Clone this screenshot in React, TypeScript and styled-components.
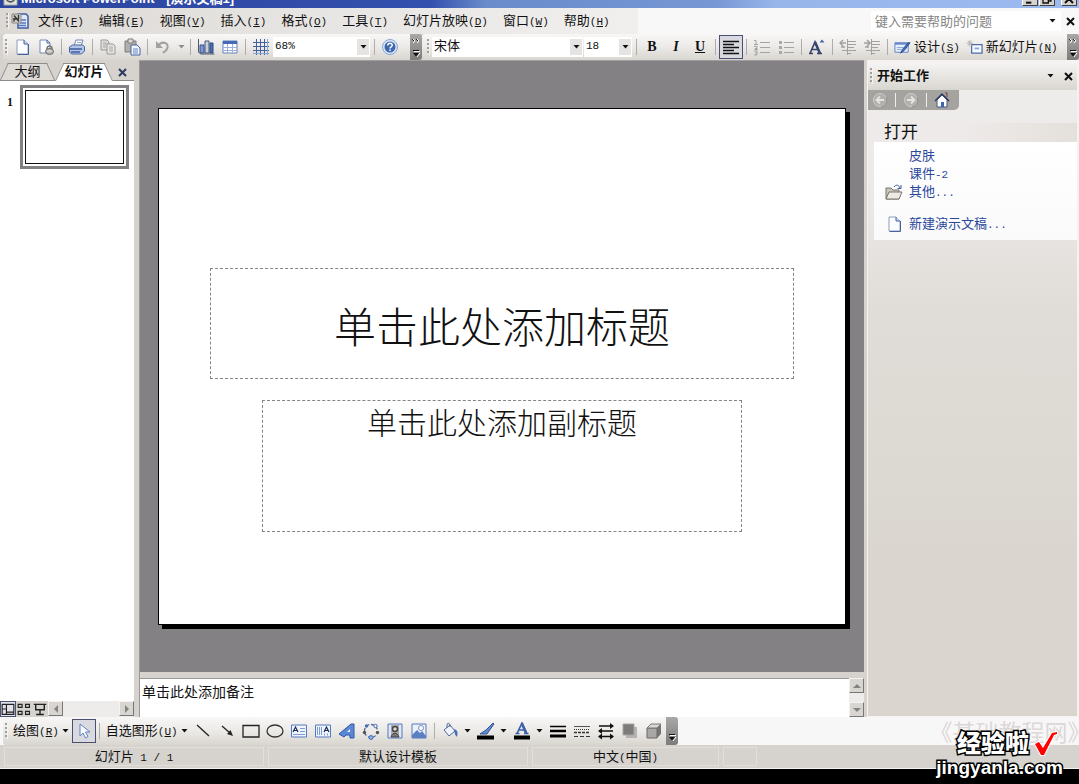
import React from 'react';
import styled, { createGlobalStyle, css } from 'styled-components';

const UI = `"Liberation Sans", "Noto Sans CJK SC", sans-serif`;
const MONO = `"Liberation Mono", "Noto Sans CJK SC", monospace`;
const SERIF = `"Liberation Serif", "Noto Sans CJK SC", serif`;

const GlobalStyle = createGlobalStyle`
  *, *::before, *::after { box-sizing: border-box; }
  body { margin: 0; background: #000; font: 13px/16px ${UI}; color: #111; }
  button, select, input, textarea { font: inherit; color: inherit; margin: 0; padding: 0; border: 0; border-radius: 0; background: none; outline: 0; }
  h1, h2, p, ul { margin: 0; padding: 0; font: inherit; list-style: none; }
  svg { display: block; flex: none; }
`;

const Window = styled.div`
  display: flex;
  flex-direction: column;
  min-height: 100vh;
  padding-bottom: 15px;
  position: relative;
  overflow: hidden;
`;

/* Title bar */
const TitleBar = styled.header`
  display: flex;
  align-items: flex-end;
  height: 8px;
  padding: 0 2px 2px 3px;
  overflow: hidden;
  color: #fff;
  background: linear-gradient(90deg, #2c46a0 0%, #3450ae 40%, #6a8cca 45%, #7696d4 66%, #98b6ea 72%, #9cbaf0 100%);
`;
const WindowTitle = styled.h1`
  flex: 1;
  margin-left: 3px;
  font-weight: 700;
  font-size: 13px;
  line-height: 14px;
  white-space: pre;
`;
const WindowButtons = styled.div`
  display: flex;
  gap: 1px;
  & > :last-child { margin-left: 5px; }
`;
const WindowButton = styled.button`
  display: flex;
  align-items: flex-end;
  justify-content: center;
  width: 16px;
  height: 14px;
  background: #d6d3ce;
  border: 1px solid;
  border-color: #fff #404040 #404040 #fff;
`;

/* Bars */
const MenuBar = styled.nav`
  display: flex;
  align-items: center;
  height: 26px;
  padding-left: 4px;
  background: linear-gradient(90deg, #dcd9d5 0, #e8e6e4 340px, #f1efee 637px, #f9f8f8 639px);
`;
const Mnemonic = styled.span`
  font: 11px/16px ${MONO};
  u { text-underline-offset: 1px; }
`;
const MenuButton = styled.button`
  padding: 0 8px 0 7px;
  height: 20px;
  white-space: nowrap;
`;
const AppIconBox = styled.span`
  width: 20px;
  display: flex;
`;
const HelpBox = styled.label`
  display: flex;
  align-items: center;
  width: 190px;
  height: 20px;
  margin-left: auto;
  padding-left: 4px;
  background: #fff;
  input { flex: 1; min-width: 0; height: 18px; }
  input::placeholder { color: #858585; opacity: 1; }
`;
const SmallButton = styled.button`
  display: flex;
  align-items: center;
  justify-content: center;
  width: 18px;
  height: 18px;
`;
const Bar = styled.div`
  display: flex;
  align-items: center;
  padding-left: 3px;
  background: #d6d3ce;
`;
const TopBar = styled(Bar)`height: 26px;`;
const BottomBar = styled(Bar)`height: 28px; background: #f8f7f7;`;
const Strip = styled.div<{ $grow?: boolean }>`
  display: flex;
  align-items: center;
  align-self: stretch;
  flex: ${p => (p.$grow ? '1 0 auto' : 'none')};
  padding-left: ${p => (p.$grow ? 3 : 0)}px;
  background: linear-gradient(#f8f7f6, #eceae7 50%, #d9d6d0);
  border-radius: 3px 0 0 3px;
`;
const Grip = styled.span`
  flex: none;
  width: 3px;
  height: 16px;
  margin: 0 2px;
  background: repeating-linear-gradient(#a09e9b 0 2px, transparent 2px 4px);
  border-right: 1px solid #f4f3f2;
`;
const ToolButton = styled.button<{ $active?: boolean; $tight?: boolean }>`
  display: flex;
  align-items: center;
  justify-content: center;
  flex: none;
  width: 24px;
  height: 24px;
  ${p => p.$tight && css`width: 12px;`}
  ${p => p.$active && css`border: 1px solid #4b5070; background: #d9dae0;`}
`;
const LabelButton = styled.button`
  display: flex;
  align-items: center;
  height: 24px;
  padding: 0 3px;
  white-space: nowrap;
  svg { margin-right: 3px; }
  svg:last-child { margin: 0 0 0 3px; }
`;
const Sep = styled.span`
  flex: none;
  width: 1px;
  height: 16px;
  margin: 0 3px;
  background: #aeacaa;
`;
const Combo = styled.span<{ $w: number; $latin?: boolean }>`
  display: flex;
  align-items: center;
  flex: none;
  width: ${p => p.$w}px;
  height: 20px;
  margin-right: 1px;
  background: #fff;
  select {
    appearance: none;
    flex: 1;
    min-width: 0;
    height: 18px;
    padding: 0 2px 2px;
    ${p => p.$latin && css`font: 11px/16px ${MONO};`}
  }
  span {
    display: flex;
    align-items: center;
    justify-content: center;
    width: 12px;
    height: 16px;
    margin-right: 1px;
    background: #e6e4e2;
  }
`;
const EndCap = styled.button`
  align-self: stretch;
  flex: none;
  width: 12px;
  border-radius: 0 3px 3px 0;
  background: linear-gradient(#aaa8a6, #7e7c7a);
`;
const CapGap = styled.span<{ $w: number }>`flex: none; width: ${p => p.$w}px;`;
const Letter = styled.span<{ $kind: 'b' | 'i' | 'u' }>`
  font: 700 14px/16px ${SERIF};
  font-style: ${p => (p.$kind === 'i' ? 'italic' : 'normal')};
  text-decoration: ${p => (p.$kind === 'u' ? 'underline' : 'none')};
`;

/* Work area */
const Workspace = styled.div`
  display: grid;
  grid-template-columns: 134px minmax(0, 1fr) 212px;
  flex: 1;
  background: #d6d3ce;
`;
const Outline = styled.aside`
  display: flex;
  flex-direction: column;
  background: #fff;
`;
const Tabs = styled.div`
  display: flex;
  align-items: stretch;
  height: 21px;
  padding: 3px 3px 0 0;
  background: #d6d3ce;
  border-bottom: 1px solid #8e8c8a;
  & > :last-child { margin-left: auto; }
`;
const Tab = styled.button<{ $active?: boolean }>`
  position: relative;
  isolation: isolate;
  width: ${p => (p.$active ? 58 : 55)}px;
  height: ${p => (p.$active ? 18 : 17)}px;
  z-index: ${p => (p.$active ? 1 : 0)};
  font-weight: ${p => (p.$active ? 700 : 400)};
  white-space: nowrap;
  &::before, &::after {
    content: '';
    position: absolute;
    z-index: -1;
    top: 0;
    bottom: 0;
    transform-origin: bottom;
    background: ${p => (p.$active ? '#fff' : '#dedbd7')};
    border-top: 1px solid #8e8c8a;
  }
  &::before { left: 0; right: 40%; transform: skewX(-25deg); border-left: 1px solid #8e8c8a; }
  &::after { right: 0; left: 40%; transform: skewX(25deg); border-right: 1px solid #8e8c8a; }
`;
const SlideList = styled.ol`
  flex: 1;
  margin: 0;
  padding: 4px 5px 0 7px;
  list-style: none;
  li { display: flex; gap: 7px; }
  b { width: 6px; padding-top: 9px; font: 700 12px/16px ${SERIF}; }
`;
const Thumb = styled.button`
  flex: 1;
  height: 84px;
  padding: 2px;
  border: 3px solid #838183;
  background: #fff;
  span { display: block; height: 100%; border: 1px solid #111; }
`;
const ViewRow = styled.div`
  display: flex;
  height: 16px;
  background: #d6d3ce;
`;
const ViewButton = styled.button<{ $active?: boolean }>`
  display: flex;
  align-items: center;
  justify-content: center;
  width: 16px;
  ${p => p.$active && css`border: 1px solid #4b5070; background: #e2e2e8;`}
`;
const ScrollTrack = styled.div<{ $vertical?: boolean }>`
  display: flex;
  flex-direction: ${p => (p.$vertical ? 'column' : 'row')};
  justify-content: space-between;
  flex: ${p => (p.$vertical ? '0 0 15px' : '1')};
  background: #eeecea;
`;
const ScrollButton = styled.button`
  display: flex;
  align-items: center;
  justify-content: center;
  width: 15px;
  height: 15px;
  background: #d9d6d2;
  border: 1px solid;
  border-color: #f4f3f2 #777 #777 #f4f3f2;
`;
const Editor = styled.main`
  display: flex;
  flex-direction: column;
  margin: 0 3px 0 5px;
  border-left: 1px solid #9a9896;
`;
const Canvas = styled.div`
  display: flex;
  align-items: center;
  flex: 1;
  padding: 0 18px;
  background: #838183;
  border-top: 1px solid #a09ea0;
`;
const Slide = styled.section`
  display: flex;
  flex-direction: column;
  align-items: center;
  gap: 21px;
  flex: 1;
  aspect-ratio: 688 / 517;
  padding-top: 159px;
  background: #fff;
  border: 1px solid #000;
  box-shadow: 4px 4px 0 #000;
`;
const Placeholder = styled.div<{ $sub?: boolean }>`
  display: flex;
  justify-content: center;
  align-items: ${p => (p.$sub ? 'flex-start' : 'center')};
  width: ${p => (p.$sub ? '70%' : '85%')};
  height: ${p => (p.$sub ? 132 : 111)}px;
  padding-top: ${p => (p.$sub ? 4 : 10)}px;
  border: 1px dashed #858585;
  font: 300 ${p => (p.$sub ? '30px/38px' : '42px/52px')} ${SERIF};
  text-align: center;
`;
const Notes = styled.div`
  display: flex;
  height: 45px;
  padding-top: 6px;
  background: #d6d3ce;
  textarea {
    flex: 1;
    min-width: 0;
    padding: 4px 2px;
    resize: none;
    background: #fff;
    border-top: 1px solid #999;
    font-size: 14px;
    line-height: 18px;
    overflow: hidden;
  }
  textarea::placeholder { color: #111; opacity: 1; }
`;

/* Task pane */
const TaskPane = styled.aside`
  display: flex;
  flex-direction: column;
  border: solid #f4f3f2;
  border-width: 2px 2px 1px 1px;
  background: linear-gradient(#efecec 0, #ece9e8 120px, #e0ddd8 250px, #dad6cf 500px);
`;
const PaneHeader = styled.div`
  display: flex;
  align-items: center;
  height: 28px;
  background: linear-gradient(#f6f5f4, #d9d6d0);
  h2 { flex: 1; font-weight: 700; margin-left: 2px; }
`;
const PaneNav = styled.div`
  display: flex;
  align-items: center;
  align-self: flex-start;
  width: 91px;
  height: 20px;
  background: #a5a39f;
  border-radius: 0 0 5px 0;
  & > span { background: #eee; height: 14px; }
`;
const PaneTitle = styled.h2`
  margin: 13px 0 0 7px;
  padding: 0 9px;
  height: 19px;
  font-size: 17px;
  line-height: 20px;
  background: linear-gradient(90deg, transparent 40%, #e4e1dc);
`;
const PaneCard = styled.ul`
  margin-left: 6px;
  padding: 5px 0 7px 11px;
  background: linear-gradient(#fff, #fafafa);
`;
const PaneItem = styled.li<{ $gap?: boolean }>`
  display: grid;
  grid-template-columns: 16px 1fr;
  column-gap: 8px;
  align-items: center;
  height: 18px;
  margin-top: ${p => (p.$gap ? 14 : 0)}px;
  a { grid-column: 2; color: #2a479c; text-decoration: none; }
`;

/* Status bar */
const StatusBar = styled.footer`
  display: flex;
  gap: 4px;
  height: 24px;
  padding: 2px 4px;
  background: #d6d3ce;
  border-bottom: 1px solid #f4f3f2;
`;
const StatusCell = styled.div<{ $w: number }>`
  width: ${p => p.$w}px;
  border: 1px solid #e2dfdb;
  text-align: center;
  line-height: 18px;
  white-space: pre;
`;
const SiteName = styled.span`
  margin-left: auto;
  color: #dcd8d8;
  font: 23px/26px "Noto Sans CJK SC", sans-serif;
  font-feature-settings: "halt";
  white-space: nowrap;
`;
const Stamp = styled.div`
  position: absolute;
  right: 16px;
  bottom: 6px;
  color: #fff;
  font-weight: 900;
  -webkit-text-stroke: 3px #000;
  paint-order: stroke fill;
`;
const StampTop = styled.p`
  display: flex;
  align-items: center;
  justify-content: flex-end;
  gap: 4px;
  padding-right: 5px;
  font-size: 24px;
  line-height: 26px;
`;
const StampUrl = styled.p`
  font-size: 19px;
  line-height: 20px;
`;

/* Icons */
const Svg = ({ s = 18, children }: { s?: number; children: React.ReactNode }) => (
  <svg width={s} height={s} viewBox="0 0 18 18" fill="none" aria-hidden="true">{children}</svg>
);
const Down = ({ c = '#111' }: { c?: string }) => (
  <svg width="7" height="4" viewBox="0 0 7 4" aria-hidden="true"><path d="M0.5 0h6L3.5 3.5z" fill={c} /></svg>
);
const Cross = ({ c = '#111' }: { c?: string }) => (
  <svg width="9" height="9" viewBox="0 0 9 9" aria-hidden="true"><path d="M1 1l7 7M8 1L1 8" stroke={c} strokeWidth="2" /></svg>
);
const Triangle = ({ d }: { d: string }) => (
  <svg width="8" height="8" viewBox="0 0 8 8" aria-hidden="true"><path d={d} fill="#858381" /></svg>
);
const CapArt = ({ more = true }: { more?: boolean }) => (
  <svg width="12" height="26" viewBox="0 0 12 26" aria-hidden="true">
    {more && <path d="M3 5l2 2-2 2M7 5l2 2-2 2" stroke="#fff" fill="none" />}
    {more && <path d="M2 5l2 2M6 5l2 2" stroke="#222" fill="none" />}
    <path d="M4 17.500h6M10 19l-3 4" stroke="#fff" fill="none" />
    <path d="M3 16.500h6" stroke="#111" />
    <path d="M3 19h6l-3 3.500z" fill="#111" />
  </svg>
);
const I = {
  app: <Svg><path d="M7 2h8l2 2v12H7z" fill="#dfe8fa" stroke="#3f5c9d" strokeWidth="1.500" /><path d="M9 8h6M9 11h6M7 13.500h8" stroke="#5676bd" strokeWidth="1.500" /><path d="M1 2h9v9H1z" fill="#cfcdc9" stroke="#8a8886" /><path d="M3 3.500l5 6M7.500 3v4h-5M3 6v3.500" stroke="#333" strokeWidth="1.400" /></Svg>,
  page: <Svg><path d="M4 2h7l4 4v10H4z" fill="#fdfeff" stroke="#8c9cbd" /><path d="M4.500 16.500h11V6" stroke="#47629f" /><path d="M11 2v4h4" fill="#cdd8ee" stroke="#47629f" /></Svg>,
  permission: <Svg><path d="M3 2h7l3 3v10H3z" fill="#fdfeff" stroke="#7487b4" /><path d="M10 2v3h3" stroke="#47629f" /><path d="M10 11c0-4 5-4 5 0" stroke="#777" strokeWidth="1.500" /><ellipse cx="12.500" cy="13.500" rx="4" ry="3" fill="#bab8b5" stroke="#666" /><path d="M10 13h5" stroke="#eee" /></Svg>,
  print: <Svg><path d="M6 8l2-6h7l-2 6" fill="#fff" stroke="#6d83b5" /><path d="M1.500 9l3-2h10l2 1.500V13l-3 3h-10l-2-2z" fill="#b5c7e9" stroke="#4c66a4" /><path d="M2 11h12M3 14h9" stroke="#405c9e" strokeWidth="1.500" /><path d="M9 4.500h4M8 6.500h4" stroke="#93a6ce" /></Svg>,
  copy: <Svg><path d="M2 2h6l2 2v8H2z" fill="#dfdddb" stroke="#9b9997" /><path d="M8 6h6l2 2v8H8z" fill="#e8e6e4" stroke="#9b9997" /><path d="M4 5h4M4 7h3M4 9h3M10 9h4M10 11h4M10 13h4" stroke="#aaa8a6" /></Svg>,
  paste: <Svg><path d="M2 3h11v11H2z" fill="#b1afac" stroke="#7f7d7b" /><path d="M5 1h5v4H5z" fill="#dddbd8" stroke="#7f7d7b" /><path d="M8 7h6l3 3v7H8z" fill="#f1f5fd" stroke="#47629f" /><path d="M10 11h5M10 13h5M10 15h5" stroke="#6b85bd" /></Svg>,
  undo: <Svg><path d="M4 8c4-6 12-3 9 3-1 2-3 3-4 4" stroke="#a3a1a0" strokeWidth="2" /><path d="M2 3v7h7z" fill="#a3a1a0" /></Svg>,
  chart: <Svg><path d="M1.500 1v13l2 2h14" stroke="#525a70" /><path d="M3 7h4v8H3z" fill="#7b98d3" stroke="#394f85" /><path d="M8 3h4v12H8z" fill="#c7d0e2" stroke="#49566f" /><path d="M13 5h3v10h-3z" fill="#4c6fb8" stroke="#2f477c" /></Svg>,
  table: <Svg><path d="M2 3h14v12H2z" fill="#fff" stroke="#6281be" /><path d="M2 3h14v3H2z" fill="#456bb5" /><path d="M6.500 6v9M11.500 6v9M2 9.500h14M2 12.500h14" stroke="#9ab1dc" /></Svg>,
  grid: <Svg><path d="M1 4.500h16M1 8.500h16M1 12.500h16M4.500 1v16M8.500 1v16M12.500 1v16" stroke="#42629f" /><path d="M1 15.500h16M15.500 1v16" stroke="#8ba4d0" /></Svg>,
  help: <Svg><circle cx="9" cy="9" r="7.500" fill="#dce7f8" stroke="#87a5d5" /><circle cx="9" cy="9" r="5.500" fill="#3e66b1" /><path d="M6.800 7.500c0-3 4.700-3 4.400 0-.1 1.500-2.200 1.300-2.200 3" stroke="#fff" strokeWidth="1.500" /><path d="M9 11.500v1.500" stroke="#fff" strokeWidth="1.500" /></Svg>,
  align: <Svg><path d="M1 3.500h16M1 6.500h11M1 9.500h16M1 12.500h11M1 15.500h16" stroke="#111" strokeWidth="1.300" /></Svg>,
  numbers: <Svg><path d="M7 4.500h10M7 9.500h10M7 14.500h10" stroke="#a5a3a1" /><path d="M1 2.500h2v4M1 6.500h4M1 8.500h3v2H2v1h3M1 13h3v4H1M2 15h2" stroke="#a5a3a1" /></Svg>,
  bullets: <Svg><path d="M7 4.500h10M7 9.500h10M7 14.500h10" stroke="#a5a3a1" /><path d="M2 3h3v3H2zM2 8h3v3H2zM2 13h3v3H2z" fill="#aaa8a6" /></Svg>,
  bigA: <Svg><path d="M2 15.500L7 4l5 11.500M4 11.500h6M1 15.500h4M9 15.500h5" stroke="#38466e" strokeWidth="1.700" /><path d="M7 4l5 11.500" stroke="#38466e" strokeWidth="2.500" /><path d="M11.500 4.500L14 1.500l2.500 3z" fill="#4268b0" /></Svg>,
  outdent: <Svg><path d="M8 3.500h9M9 6.500h8M9 9.500h6M3 12.500h14M8 15.500h4M8.500 1v16" stroke="#a3a1a0" /><path d="M1 5h6M4 2L1 5l3 3M2 9h4" stroke="#a3a1a0" strokeWidth="1.500" /></Svg>,
  indent: <Svg><path d="M8 3.500h9M9 6.500h8M9 9.500h6M3 12.500h14M8 15.500h4M8.500 1v16" stroke="#a3a1a0" /><path d="M1 5h6M4 2l3 3-3 3M2 9h4" stroke="#a3a1a0" strokeWidth="1.500" /></Svg>,
  design: <Svg s={17}><path d="M1 4h14v10H1z" fill="#e8f0fd" stroke="#5d7fbd" /><path d="M1 4h14v2H1z" fill="#6589c8" /><path d="M3 9h7M3 11h5" stroke="#8aa4d3" /><path d="M17 4l-6 8-4 3 2-4 6-7z" fill="#456fb9" stroke="#27498d" /></Svg>,
  newSlide: <Svg s={17}><path d="M6 6h11v9H6z" fill="#f8fbff" stroke="#4c6ba9" strokeWidth="1.300" /><path d="M9 9h5v2H9z" fill="#8aa7dd" /><path d="M4 1v7M.500 4.500h7M2 2l4 5M6 2L2 7" stroke="#b7b4ae" /></Svg>,
  back: <Svg><circle cx="9" cy="9" r="6.500" fill="#b2b0ad" stroke="#cfcdca" /><path d="M13 9H6M9 5.500L5.500 9 9 12.500" stroke="#e6e4e2" strokeWidth="1.800" /><path d="M15 6c2 4 0 9-5 10" stroke="#8b8987" /></Svg>,
  forward: <Svg><circle cx="9" cy="9" r="6.500" fill="#b2b0ad" stroke="#cfcdca" /><path d="M5 9h7M9 5.500L12.500 9 9 12.500" stroke="#e6e4e2" strokeWidth="1.800" /><path d="M15 6c2 4 0 9-5 10" stroke="#8b8987" /></Svg>,
  home: <Svg><path d="M4 9v7h10V9L9 4z" fill="#fff" stroke="#46598a" /><path d="M2 10l7-7 7 7" stroke="#2e3c66" strokeWidth="1.500" /><path d="M12 2h2v4" stroke="#7a3b3b" /><path d="M8 11h3v5H8z" fill="#4165ae" /></Svg>,
  folder: <Svg><path d="M1 5h5l2 2h6v9H1z" fill="#c9c7bd" stroke="#77756d" /><path d="M4 9h13l-3 7H1z" fill="#eceae2" stroke="#77756d" /><path d="M9 4c2-3 5-2 6 1M16 2v3.500h-3.500" stroke="#3c5b9e" /></Svg>,
  normal: <Svg s={14}><path d="M1.500 3h15v13h-15zM7 3v13M1.500 9H7M7 13h9" stroke="#222" strokeWidth="1.500" /></Svg>,
  sorter: <Svg s={14}><path d="M1.500 3h5v4h-5zM11 3h5v4h-5zM1.500 12h5v4h-5zM11 12h5v4h-5z" stroke="#222" strokeWidth="1.500" /></Svg>,
  show: <Svg s={14}><path d="M1 3h16M3.500 3v7h11V3M9 10v5M4 16h10" stroke="#222" strokeWidth="1.800" /></Svg>,
  cursor: <Svg><path d="M5 2v12l3-3 2.500 5 2.500-1.500-2.500-4.500H15z" fill="#f6f9ff" stroke="#6482bd" /></Svg>,
  line: <Svg><path d="M3 3l12 11" stroke="#222" strokeWidth="1.300" /></Svg>,
  arrow: <Svg><path d="M4 4l8 7" stroke="#222" strokeWidth="1.300" /><path d="M15 14l-6-2 3.500-4z" fill="#222" /></Svg>,
  rect: <Svg><path d="M1 3.500h16v11.500H1z" stroke="#222" strokeWidth="1.300" /></Svg>,
  oval: <Svg><ellipse cx="9" cy="9" rx="8" ry="6" stroke="#333" strokeWidth="1.300" /></Svg>,
  textH: <Svg><path d="M1.500 3h15v12h-15z" fill="#eef4fe" stroke="#5679bb" /><path d="M3 10l2.500-5L8 10M4 8.500h3" stroke="#1d2b4d" strokeWidth="1.200" /><path d="M10 6.500h5M10 9.500h5M3 12.500h12" stroke="#7f9cd3" /></Svg>,
  textV: <Svg><path d="M1.500 3h15v12h-15z" fill="#eef4fe" stroke="#5679bb" /><path d="M10 10l2.500-5L15 10M11 8.500h3" stroke="#1d2b4d" strokeWidth="1.200" /><path d="M3.500 5v8M5.500 5v8M7.500 5v8M10.500 11.500v2M13.500 11.500v2" stroke="#7f9cd3" /></Svg>,
  wordart: <Svg><path d="M1 12L13 2h3v14h-4v-3H8l-2 2z" fill="#5b87d6" stroke="#2f58a6" /><path d="M9 10h3V7z" fill="#e9f0fc" /></Svg>,
  diagram: <Svg><circle cx="9" cy="9" r="6.500" stroke="#4d6296" strokeDasharray="3 2" strokeWidth="1.300" /><circle cx="4.500" cy="4" r="1.700" fill="#466cb4" /><circle cx="13.500" cy="4" r="1.700" fill="#eef4fe" stroke="#466cb4" /><circle cx="15.500" cy="10.500" r="1.700" fill="#555" /><circle cx="9" cy="15.500" r="2" fill="#8bb0ec" stroke="#466cb4" /><circle cx="2.500" cy="10.500" r="1.700" fill="#555" /></Svg>,
  clip: <Svg><path d="M2 2h14v14H2z" fill="#dfe8f8" stroke="#5679bb" /><path d="M5 3h8v12H5z" fill="#aaa" /><circle cx="9" cy="7" r="2.500" fill="#ddd" stroke="#444" strokeWidth="1.500" /><path d="M5 15c1-5 7-5 8 0z" fill="#777" stroke="#444" /></Svg>,
  picture: <Svg><path d="M2 2h14v14H2z" fill="#e9f1fe" stroke="#5679bb" /><path d="M2 13l5-5 3 3 2-2 4 5v2H2z" fill="#5b7fc0" /><circle cx="11" cy="6" r="2.500" fill="#fff" stroke="#7d91b8" /></Svg>,
  fill: <Svg><path d="M3 8l6-5 5 6-6 5z" fill="#eef3fc" stroke="#53699b" /><path d="M6 6V3c0-3 4-2 3 2" stroke="#53699b" /><path d="M13 7c4 1 4 4 3 8-2-2-3-4-2-6" fill="#4470bd" /></Svg>,
  pen: <Svg><path d="M16 1L9 8l-6 4h7l2-3 5-7z" fill="#5f8ad4" stroke="#34548f" /><path d="M0 13.500h17v4H0z" fill="#000" /></Svg>,
  fontColor: <Svg><path d="M4 11.500L9 1l5 10.500M6 8h6M2.500 11.500h4M11 11.500h4.500" stroke="#3d62ab" strokeWidth="1.700" /><path d="M9 2l4 9" stroke="#3d62ab" strokeWidth="2.500" /><path d="M1 13.500h16v4H1z" fill="#000" /></Svg>,
  lines: <Svg><path d="M1 4.500h16" stroke="#000" strokeWidth="1.500" /><path d="M1 9h16" stroke="#000" strokeWidth="2.500" /><path d="M1 14h16" stroke="#000" strokeWidth="3" /></Svg>,
  dashes: <Svg><path d="M1 4.500h16" stroke="#555" /><path d="M1 7.500h16" stroke="#333" strokeDasharray="1 1" /><path d="M1 10.500h16" stroke="#333" strokeDasharray="3 1" strokeWidth="1.500" /><path d="M1 14.500h16" stroke="#333" strokeDasharray="4 2" /></Svg>,
  arrows: <Svg><path d="M2 4h13M2 9h14M2 14.500h14" stroke="#111" strokeWidth="1.300" /><path d="M13 1l4 3-4 3zM5 6L1 9l4 3zM5 11.500l-4 3 4 3zM13 11.500l4 3-4 3z" fill="#111" /></Svg>,
  shadow: <Svg><path d="M5 5h11v11H5z" fill="#b5b3b1" /><path d="M2 2h11v11H2z" fill="#7e7c7a" stroke="#a8a6a4" /></Svg>,
  cube: <Svg><path d="M2 6l4-4h10v10l-4 4H2z" fill="#777573" /><path d="M2 6h10v10H2z" fill="#a9a7a5" stroke="#6b6967" /><path d="M2 6l4-4h10l-4 4z" fill="#dad8d6" stroke="#77757a" /></Svg>,
};

const Tool = ({ icon, label, active, tight }: { icon: React.ReactNode; label: string; active?: boolean; tight?: boolean }) => (
  <ToolButton type="button" aria-label={label} $active={active} $tight={tight}>{icon}</ToolButton>
);
const Key = ({ k }: { k: string }) => <Mnemonic>(<u>{k}</u>)</Mnemonic>;

const menus: [string, string][] = [
  ['文件', 'F'], ['编辑', 'E'], ['视图', 'V'], ['插入', 'I'], ['格式', 'O'],
  ['工具', 'T'], ['幻灯片放映', 'D'], ['窗口', 'W'], ['帮助', 'H'],
];

const ComboBox = ({ w, value, label, latin }: { w: number; value: string; label: string; latin?: boolean }) => (
  <Combo $w={w} $latin={latin}>
    <select aria-label={label} defaultValue={value}><option>{value}</option></select>
    <span><Down /></span>
  </Combo>
);

export default function App() {
  return (
    <>
      <GlobalStyle />
      <Window>
        <TitleBar>
          <Svg s={15}><path d="M1 1h16v16H1z" fill="#dfe3df" stroke="#888" /><circle cx="9" cy="8" r="5" stroke="#555" strokeWidth="2" /></Svg>
          <WindowTitle>Microsoft PowerPoint - [演示文稿1]</WindowTitle>
          <WindowButtons>
            <WindowButton type="button" aria-label="最小化"><Svg s={12}><path d="M3 13h8v3H3z" fill="#111" /></Svg></WindowButton>
            <WindowButton type="button" aria-label="还原"><Svg s={12}><path d="M3 7h8v8H3zM6 3h9v9h-4" stroke="#111" strokeWidth="2" /></Svg></WindowButton>
            <WindowButton type="button" aria-label="关闭"><Svg s={12}><path d="M3 3l12 12M15 3L3 15" stroke="#111" strokeWidth="3" /></Svg></WindowButton>
          </WindowButtons>
        </TitleBar>

        <MenuBar>
          <Grip />
          <AppIconBox>{I.app}</AppIconBox>
          {menus.map(([name, k]) => (
            <MenuButton type="button" key={name}>{name}<Key k={k} /></MenuButton>
          ))}
          <HelpBox>
            <input type="text" aria-label="键入需要帮助的问题" placeholder="键入需要帮助的问题" />
            <SmallButton type="button" aria-label="展开"><Down /></SmallButton>
          </HelpBox>
          <SmallButton type="button" aria-label="关闭文档"><Cross /></SmallButton>
        </MenuBar>

        <TopBar>
          <Strip>
            <Grip />
            <Tool icon={I.page} label="新建" />
            <Tool icon={I.permission} label="权限" />
            <Sep />
            <Tool icon={I.print} label="打印" />
            <Sep />
            <Tool icon={I.copy} label="复制" />
            <Tool icon={I.paste} label="粘贴" />
            <Sep />
            <Tool icon={I.undo} label="撤消" />
            <Tool icon={<Down c="#8e8c8a" />} label="撤消列表" tight />
            <Sep />
            <Tool icon={I.chart} label="插入图表" />
            <Tool icon={I.table} label="插入表格" />
            <Sep />
            <Tool icon={I.grid} label="显示网格" />
            <ComboBox w={97} value="68%" label="显示比例" latin />
            <Sep />
            <Tool icon={I.help} label="帮助" />
            <CapGap $w={8} />
          </Strip>
          <EndCap type="button" aria-label="工具栏选项"><CapArt /></EndCap>
          <Strip $grow>
            <Grip />
            <ComboBox w={151} value="宋体" label="字体" />
            <ComboBox w={48} value="18" label="字号" latin />
            <Sep />
            <Tool icon={<Letter $kind="b">B</Letter>} label="加粗" />
            <Tool icon={<Letter $kind="i">I</Letter>} label="倾斜" />
            <Tool icon={<Letter $kind="u">U</Letter>} label="下划线" />
            <Sep />
            <Tool icon={I.align} label="左对齐" active />
            <Sep />
            <Tool icon={I.numbers} label="编号" />
            <Tool icon={I.bullets} label="项目符号" />
            <Sep />
            <Tool icon={I.bigA} label="增大字号" />
            <Sep />
            <Tool icon={I.outdent} label="减少缩进量" />
            <Tool icon={I.indent} label="增加缩进量" />
            <Sep />
            <LabelButton type="button">{I.design}<span>设计<Key k="S" /></span></LabelButton>
            <LabelButton type="button">{I.newSlide}<span>新幻灯片<Key k="N" /></span></LabelButton>
          </Strip>
          <EndCap type="button" aria-label="工具栏选项"><CapArt /></EndCap>
        </TopBar>

        <Workspace>
          <Outline>
            <Tabs>
              <Tab type="button">大纲</Tab>
              <Tab type="button" $active>幻灯片</Tab>
              <SmallButton type="button" aria-label="关闭窗格"><Cross c="#2d3a5e" /></SmallButton>
            </Tabs>
            <SlideList>
              <li><b>1</b><Thumb type="button" aria-label="幻灯片 1"><span /></Thumb></li>
            </SlideList>
            <ViewRow>
              <ViewButton type="button" aria-label="普通视图" $active>{I.normal}</ViewButton>
              <ViewButton type="button" aria-label="幻灯片浏览视图">{I.sorter}</ViewButton>
              <ViewButton type="button" aria-label="幻灯片放映">{I.show}</ViewButton>
              <ScrollTrack>
                <ScrollButton type="button" aria-label="向左"><Triangle d="M6 0v8L2 4z" /></ScrollButton>
                <ScrollButton type="button" aria-label="向右"><Triangle d="M2 0v8l4-4z" /></ScrollButton>
              </ScrollTrack>
            </ViewRow>
          </Outline>

          <Editor>
            <Canvas>
              <Slide>
                <Placeholder>单击此处添加标题</Placeholder>
                <Placeholder $sub>单击此处添加副标题</Placeholder>
              </Slide>
            </Canvas>
            <Notes>
              <textarea aria-label="备注" placeholder="单击此处添加备注" />
              <ScrollTrack $vertical>
                <ScrollButton type="button" aria-label="向上"><Triangle d="M0 6h8L4 2z" /></ScrollButton>
                <ScrollButton type="button" aria-label="向下"><Triangle d="M0 2h8L4 6z" /></ScrollButton>
              </ScrollTrack>
            </Notes>
          </Editor>

          <TaskPane>
            <PaneHeader>
              <Grip />
              <h2>开始工作</h2>
              <SmallButton type="button" aria-label="其他任务窗格"><Down /></SmallButton>
              <SmallButton type="button" aria-label="关闭任务窗格"><Cross /></SmallButton>
            </PaneHeader>
            <PaneNav>
              <Tool icon={I.back} label="后退" />
              <Sep />
              <Tool icon={I.forward} label="前进" />
              <Sep />
              <Tool icon={I.home} label="主页" />
            </PaneNav>
            <PaneTitle>打开</PaneTitle>
            <PaneCard>
              <PaneItem><a href="#skin">皮肤</a></PaneItem>
              <PaneItem><a href="#course">课件<Mnemonic>-2</Mnemonic></a></PaneItem>
              <PaneItem>{I.folder}<a href="#more">其他<Mnemonic>...</Mnemonic></a></PaneItem>
              <PaneItem $gap>{I.page}<a href="#new">新建演示文稿<Mnemonic>...</Mnemonic></a></PaneItem>
            </PaneCard>
          </TaskPane>
        </Workspace>

        <BottomBar>
          <Strip>
            <Grip />
            <LabelButton type="button"><span>绘图<Key k="R" /></span><Down /></LabelButton>
            <Tool icon={I.cursor} label="选择对象" active />
            <Sep />
            <LabelButton type="button"><span>自选图形<Key k="U" /></span><Down /></LabelButton>
            <Tool icon={I.line} label="直线" />
            <Tool icon={I.arrow} label="箭头" />
            <Tool icon={I.rect} label="矩形" />
            <Tool icon={I.oval} label="椭圆" />
            <Tool icon={I.textH} label="文本框" />
            <Tool icon={I.textV} label="竖排文本框" />
            <Tool icon={I.wordart} label="艺术字" />
            <Tool icon={I.diagram} label="图示" />
            <Tool icon={I.clip} label="剪贴画" />
            <Tool icon={I.picture} label="图片" />
            <Sep />
            <Tool icon={I.fill} label="填充颜色" />
            <Tool icon={<Down />} label="填充颜色列表" tight />
            <Tool icon={I.pen} label="线条颜色" />
            <Tool icon={<Down />} label="线条颜色列表" tight />
            <Tool icon={I.fontColor} label="字体颜色" />
            <Tool icon={<Down />} label="字体颜色列表" tight />
            <Tool icon={I.lines} label="线型" />
            <Tool icon={I.dashes} label="虚线线型" />
            <Tool icon={I.arrows} label="箭头样式" />
            <Tool icon={I.shadow} label="阴影样式" />
            <Tool icon={I.cube} label="三维效果样式" />
          </Strip>
          <EndCap type="button" aria-label="工具栏选项"><CapArt more={false} /></EndCap>
          <SiteName>《基础教程网》</SiteName>
        </BottomBar>

        <StatusBar>
          <StatusCell $w={260}>幻灯片<Mnemonic> 1 / 1</Mnemonic></StatusCell>
          <StatusCell $w={260}>默认设计模板</StatusCell>
          <StatusCell $w={187}>中文<Mnemonic>(</Mnemonic>中国<Mnemonic>)</Mnemonic></StatusCell>
          <StatusCell $w={34} />
        </StatusBar>

        <Stamp>
          <StampTop>
            经验啦
            <svg width="25" height="28" viewBox="0 0 25 28" aria-hidden="true">
              <path d="M2 14l4-2 4 6L19 3l5-1v2l-3 1L11 25H8z" fill="#f00" stroke="#fff" strokeWidth="2" paintOrder="stroke" />
            </svg>
          </StampTop>
          <StampUrl>jingyanla.com</StampUrl>
        </Stamp>
      </Window>
    </>
  );
}
